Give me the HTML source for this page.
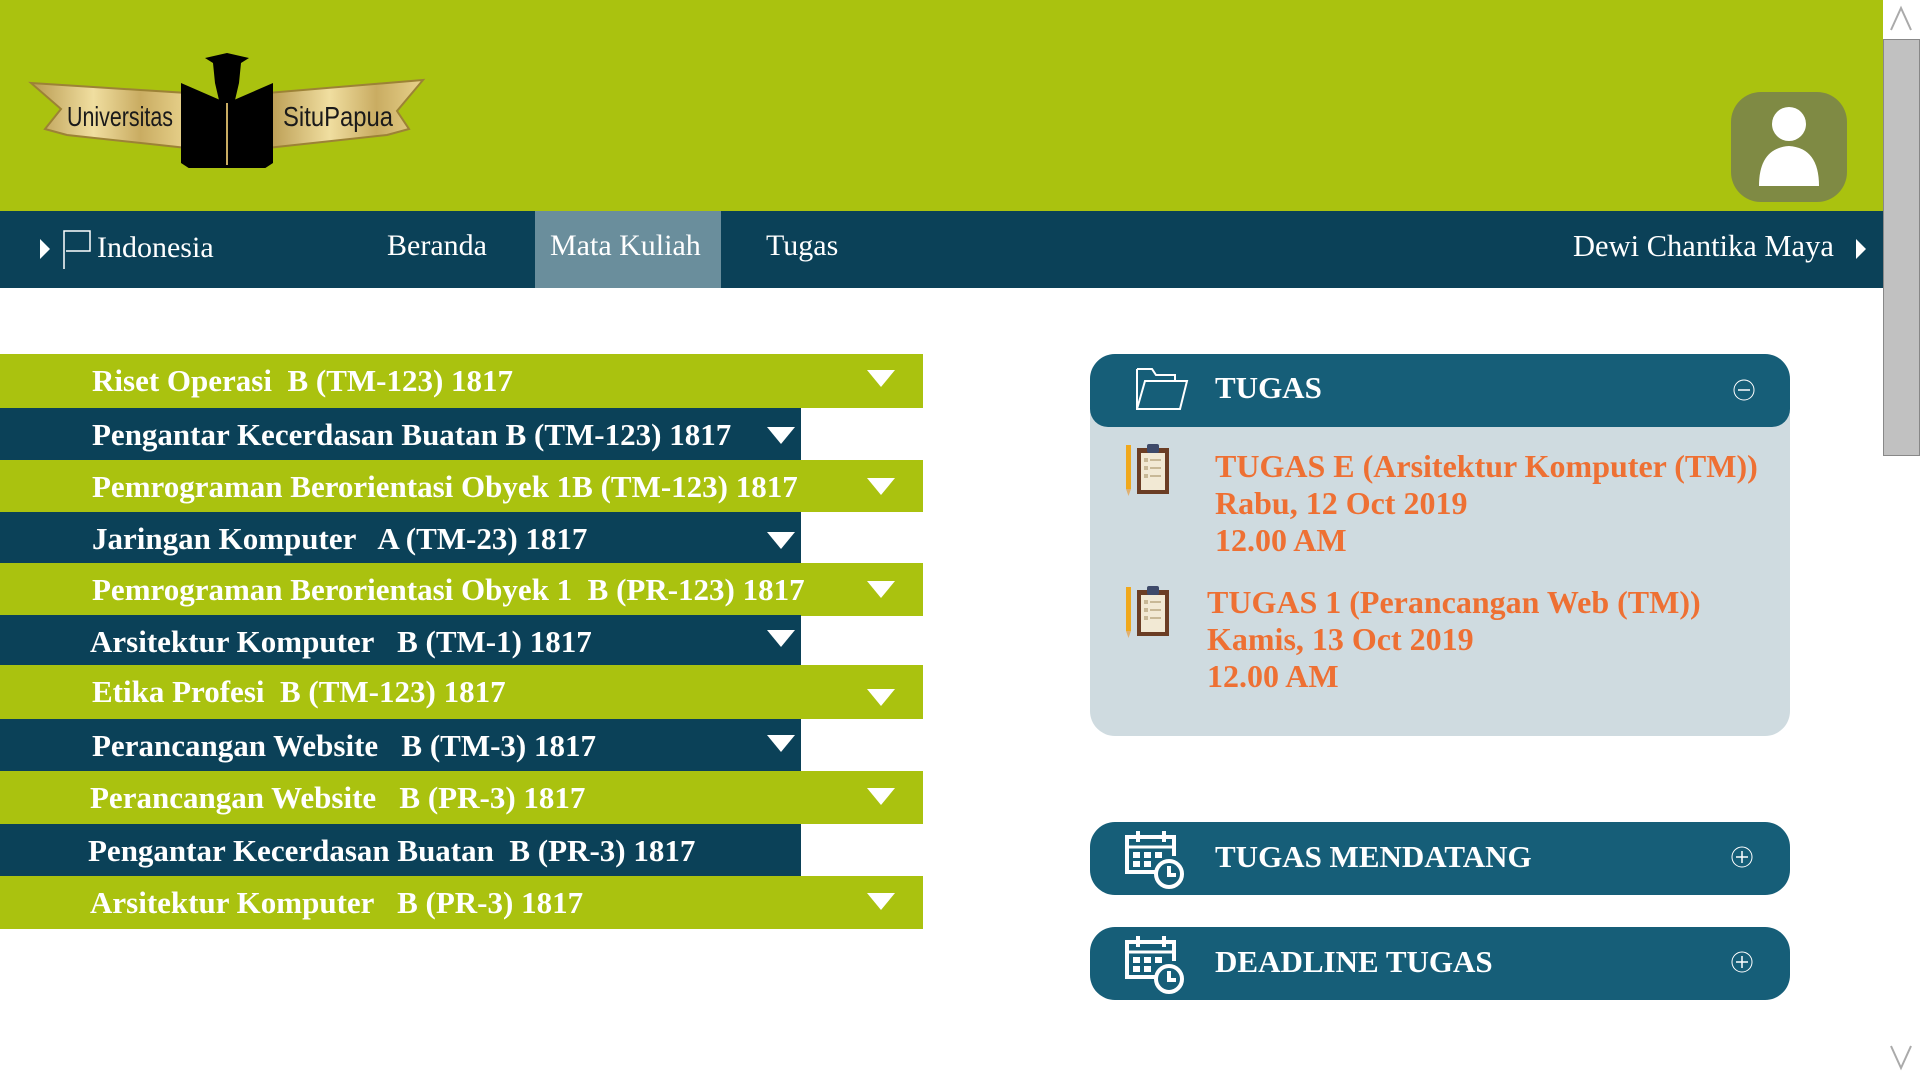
<!DOCTYPE html>
<html><head><meta charset="utf-8"><style>
*{margin:0;padding:0;box-sizing:border-box}
body{width:1920px;height:1080px;overflow:hidden;background:#fff;font-family:"Liberation Serif",serif;position:relative}
.hdr{position:absolute;left:0;top:0;width:1883px;height:211px;background:#aac20f}
.nav{position:absolute;left:0;top:211px;width:1883px;height:77px;background:#0b4158;color:#fff;font-size:30px}
.nav span{position:absolute;top:18px}
.hl{position:absolute;left:535px;top:0;width:186px;height:77px;background:#6a8e9c}
.row{position:absolute;left:0;color:#fff;font-weight:bold;font-size:31px;white-space:pre}
.row .t{position:absolute;left:92px;top:9px}
.g{background:#aac20f;width:923px}
.d{background:#0b4158;width:801px}
.tri{position:absolute;width:0;height:0;border-left:14px solid transparent;border-right:14px solid transparent;border-top:17px solid #fff}
.g .tri{left:867px}.d .tri{left:767px}
.sb{position:absolute;left:1883px;top:0;width:37px;height:1080px;background:#fff}
.thumb{position:absolute;left:1883px;top:39px;width:37px;height:417px;background:#c1c1c1;border:1px solid #888}
.panel{position:absolute;left:1090px;width:700px;background:#165e78;border-radius:25px;color:#fff;font-weight:bold;font-size:31px}
.or{position:absolute;color:#ee7033;font-size:32px;line-height:37px;font-weight:bold}
</style></head><body>
<div class="hdr"></div>
<svg style="position:absolute;left:27px;top:33px" width="400" height="135" viewBox="0 0 400 135">
<defs><linearGradient id="gd" x1="0" x2="1"><stop offset="0" stop-color="#b89a50"/><stop offset=".4" stop-color="#f0dea0"/><stop offset=".7" stop-color="#c9ac62"/><stop offset="1" stop-color="#e8d28c"/></linearGradient></defs>
<path d="M4 50 L160 60 L160 115 L40 102 L18 96 L34 76 Z" fill="url(#gd)" stroke="#9c8236" stroke-width="2"/>
<path d="M396 47 L240 60 L240 115 L360 102 L382 96 L370 78 Z" fill="url(#gd)" stroke="#9c8236" stroke-width="2"/>
<path d="M178 25 L200 20 L222 25 L214 30 L212 50 L205 80 L195 80 L188 50 L186 30 Z" fill="#000"/>
<path d="M154 50 L200 70 L246 50 L246 130 L200 160 L154 130 Z" fill="#000"/>
<line x1="200" y1="70" x2="200" y2="132" stroke="#c9ac62" stroke-width="2"/>
<text x="40" y="93" font-family="Liberation Sans, sans-serif" font-size="28" fill="#1a1a1a" textLength="106" lengthAdjust="spacingAndGlyphs">Universitas</text>
<text x="256" y="93" font-family="Liberation Sans, sans-serif" font-size="28" fill="#1a1a1a" textLength="110" lengthAdjust="spacingAndGlyphs">SituPapua</text>
</svg>
<div style="position:absolute;left:1731px;top:92px;width:116px;height:110px;background:#7f8a44;border-radius:30px"></div>
<svg style="position:absolute;left:1731px;top:92px" width="116" height="110"><circle cx="58" cy="32" r="17" fill="#fff"/><path d="M28 94 Q28 56 58 54 Q88 56 88 94 Z" fill="#fff"/></svg>
<div class="nav">
<div class="hl"></div>
<div style="position:absolute;left:40px;top:28px;border-left:10px solid #fff;border-top:10px solid transparent;border-bottom:10px solid transparent"></div>
<svg style="position:absolute;left:62px;top:18px" width="30" height="40"><path d="M2 40 V2 H28 V22 H4" fill="none" stroke="#fff" stroke-width="1.5"/></svg>
<span style="left:97px;top:20px">Indonesia</span>
<span style="left:387px">Beranda</span>
<span style="left:550px">Mata Kuliah</span>
<span style="left:766px">Tugas</span>
<span style="left:1573px;font-size:30.5px">Dewi Chantika Maya</span>
<div style="position:absolute;left:1856px;top:28px;border-left:10px solid #fff;border-top:10px solid transparent;border-bottom:10px solid transparent"></div>
</div>
<div class="row g" style="top:354px;height:54px"><span class="t">Riset Operasi  B (TM-123) 1817</span><div class="tri" style="top:16px"></div></div>
<div class="row d" style="top:408px;height:52px"><span class="t">Pengantar Kecerdasan Buatan B (TM-123) 1817</span><div class="tri" style="top:19px"></div></div>
<div class="row g" style="top:460px;height:52px"><span class="t">Pemrograman Berorientasi Obyek 1B (TM-123) 1817</span><div class="tri" style="top:18px"></div></div>
<div class="row d" style="top:512px;height:57px"><span class="t">Jaringan Komputer   A (TM-23) 1817</span><div class="tri" style="top:20px"></div></div>
<div class="row g" style="top:563px;height:53px"><span class="t">Pemrograman Berorientasi Obyek 1  B (PR-123) 1817</span><div class="tri" style="top:18px"></div></div>
<div class="row d" style="top:615px;height:50px"><span class="t" style="left:90px">Arsitektur Komputer   B (TM-1) 1817</span><div class="tri" style="top:15px"></div></div>
<div class="row g" style="top:665px;height:54px"><span class="t">Etika Profesi  B (TM-123) 1817</span><div class="tri" style="top:24px"></div></div>
<div class="row d" style="top:719px;height:52px"><span class="t">Perancangan Website   B (TM-3) 1817</span><div class="tri" style="top:16px"></div></div>
<div class="row g" style="top:771px;height:53px"><span class="t" style="left:90px">Perancangan Website   B (PR-3) 1817</span><div class="tri" style="top:17px"></div></div>
<div class="row d" style="top:824px;height:52px"><span class="t" style="left:88px">Pengantar Kecerdasan Buatan  B (PR-3) 1817</span></div>
<div class="row g" style="top:876px;height:53px"><span class="t" style="left:90px">Arsitektur Komputer   B (PR-3) 1817</span><div class="tri" style="top:17px"></div></div>

<div class="panel" style="top:354px;height:382px;background:#cfdbe0"></div>
<div class="panel" style="top:354px;height:73px;border-bottom-left-radius:18px;border-bottom-right-radius:18px"><span style="position:absolute;left:125px;top:16px">TUGAS</span></div>
<svg style="position:absolute;left:1135px;top:367px" width="55" height="45"><path d="M2 2 H17 L21 8 H40 V14 M2 2 V42 H45 L52 14 H10 L2 42" fill="none" stroke="#fff" stroke-width="2"/></svg>
<svg style="position:absolute;left:1732px;top:378px" width="24" height="24"><circle cx="12" cy="12" r="10" fill="none" stroke="#fff" stroke-width="1"/><line x1="6" y1="12" x2="18" y2="12" stroke="#fff" stroke-width="1.5"/></svg>
<svg style="position:absolute;left:1125px;top:442px" width="50" height="55"><rect x="1" y="3" width="5" height="44" fill="#f0a81c"/><path d="M1 47 L3.5 54 L6 47Z" fill="#e0b070"/><rect x="12" y="6" width="32" height="46" fill="#6b3d24"/><rect x="16" y="11" width="24" height="37" fill="#f2e9d4"/><rect x="22" y="2" width="12" height="9" rx="2" fill="#3e4a6a"/><g fill="#c8b896"><rect x="19" y="16" width="4" height="4"/><rect x="25" y="17" width="11" height="2"/><rect x="19" y="24" width="4" height="4"/><rect x="25" y="25" width="11" height="2"/><rect x="19" y="32" width="4" height="4"/><rect x="25" y="33" width="11" height="2"/></g></svg>
<svg style="position:absolute;left:1125px;top:584px" width="50" height="55"><rect x="1" y="3" width="5" height="44" fill="#f0a81c"/><path d="M1 47 L3.5 54 L6 47Z" fill="#e0b070"/><rect x="12" y="6" width="32" height="46" fill="#6b3d24"/><rect x="16" y="11" width="24" height="37" fill="#f2e9d4"/><rect x="22" y="2" width="12" height="9" rx="2" fill="#3e4a6a"/><g fill="#c8b896"><rect x="19" y="16" width="4" height="4"/><rect x="25" y="17" width="11" height="2"/><rect x="19" y="24" width="4" height="4"/><rect x="25" y="25" width="11" height="2"/><rect x="19" y="32" width="4" height="4"/><rect x="25" y="33" width="11" height="2"/></g></svg>
<div class="or" style="left:1215px;top:448px">TUGAS E (Arsitektur Komputer (TM))<br>Rabu, 12 Oct 2019<br>12.00 AM</div>
<div class="or" style="left:1207px;top:584px">TUGAS 1 (Perancangan Web (TM))<br>Kamis, 13 Oct 2019<br>12.00 AM</div>

<div class="panel" style="top:822px;height:73px"><span style="position:absolute;left:125px;top:17px">TUGAS MENDATANG</span></div>
<div class="panel" style="top:927px;height:73px"><span style="position:absolute;left:125px;top:17px">DEADLINE TUGAS</span></div>
<svg style="position:absolute;left:1124px;top:828px" width="64" height="64"><g fill="none" stroke="#fff" stroke-width="4"><path d="M34 44 H3 V9 H50 V28"/><line x1="14" y1="3" x2="14" y2="14"/><line x1="40" y1="3" x2="40" y2="14"/><circle cx="45" cy="46" r="13"/><path d="M45 38 V47 H52"/></g><line x1="3" y1="19" x2="50" y2="19" stroke="#fff" stroke-width="3"/><g fill="#fff"><rect x="9" y="24" width="7" height="6"/><rect x="20" y="24" width="7" height="6"/><rect x="31" y="24" width="7" height="6"/><rect x="9" y="33" width="7" height="6"/><rect x="20" y="33" width="7" height="6"/></g></svg>
<svg style="position:absolute;left:1124px;top:933px" width="64" height="64"><g fill="none" stroke="#fff" stroke-width="4"><path d="M34 44 H3 V9 H50 V28"/><line x1="14" y1="3" x2="14" y2="14"/><line x1="40" y1="3" x2="40" y2="14"/><circle cx="45" cy="46" r="13"/><path d="M45 38 V47 H52"/></g><line x1="3" y1="19" x2="50" y2="19" stroke="#fff" stroke-width="3"/><g fill="#fff"><rect x="9" y="24" width="7" height="6"/><rect x="20" y="24" width="7" height="6"/><rect x="31" y="24" width="7" height="6"/><rect x="9" y="33" width="7" height="6"/><rect x="20" y="33" width="7" height="6"/></g></svg>
<svg style="position:absolute;left:1730px;top:845px" width="24" height="24"><circle cx="12" cy="12" r="10" fill="none" stroke="#fff"/><path d="M6 12 H18 M12 6 V18" stroke="#fff" stroke-width="1.5"/></svg>
<svg style="position:absolute;left:1730px;top:950px" width="24" height="24"><circle cx="12" cy="12" r="10" fill="none" stroke="#fff"/><path d="M6 12 H18 M12 6 V18" stroke="#fff" stroke-width="1.5"/></svg>

<div class="sb"></div>
<div class="thumb"></div>
<svg style="position:absolute;left:1886px;top:4px" width="30" height="30"><path d="M5 26 L15 4 L25 26" fill="none" stroke="#aaa" stroke-width="2"/></svg>
<svg style="position:absolute;left:1886px;top:1042px" width="30" height="30"><path d="M5 4 L15 26 L25 4" fill="none" stroke="#aaa" stroke-width="2"/></svg>
</body></html>
